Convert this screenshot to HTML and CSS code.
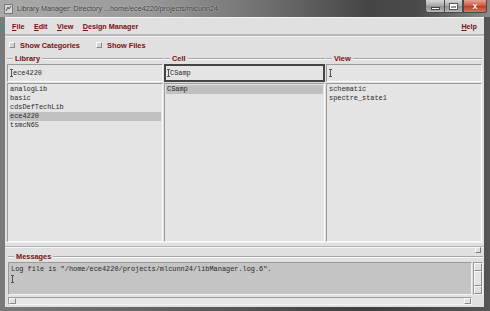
FILE: index.html
```html
<!DOCTYPE html>
<html>
<head>
<meta charset="utf-8">
<link rel="stylesheet" href="styles.css">
</head>
<body>
<div class="window">
  <div class="titlebar">
    <svg class="appicon" width="9" height="10" viewBox="0 0 9 10">
      <rect x="0.5" y="0.5" width="8" height="9" fill="#d8d8d8" stroke="#777"/>
      <path d="M2 7 L4 3 L5 5 L7 2" stroke="#555" fill="none"/>
    </svg>
    <span class="title">Library Manager: Directory ...home/ece4220/projects/mlcunn24</span>
    <div class="winbtns">
      <span class="wb min"><span class="minbar"></span></span>
      <span class="wb max"><span class="maxbox"></span></span>
      <span class="wb close">x</span>
    </div>
  </div>
  <div class="client">
    <div class="menubar">
      <span class="mi"><u>F</u>ile</span>
      <span class="mi"><u>E</u>dit</span>
      <span class="mi"><u>V</u>iew</span>
      <span class="mi"><u>D</u>esign Manager</span>
      <span class="spacer"></span>
      <span class="mi help"><u>H</u>elp</span>
    </div>
    <div class="options">
      <span class="chk"><span class="box"></span>Show Categories</span>
      <span class="chk"><span class="box"></span>Show Files</span>
    </div>
    <div class="panes">
      <div class="pane side">
        <div class="ghead"><span class="gline short"></span><span class="glabel">Library</span><span class="gline"></span></div>
        <div class="field"><span class="caret"></span>ece4220</div>
        <div class="list">
          <div class="item">analogLib</div>
          <div class="item">basic</div>
          <div class="item">cdsDefTechLib</div>
          <div class="item sel">ece4220</div>
          <div class="item">tsmcN65</div>
        </div>
      </div>
      <div class="pane mid">
        <div class="ghead"><span class="gline short"></span><span class="glabel">Cell</span><span class="gline"></span></div>
        <div class="field focus"><span class="caret"></span>CSamp</div>
        <div class="list">
          <div class="item sel">CSamp</div>
        </div>
      </div>
      <div class="pane side">
        <div class="ghead"><span class="gline short"></span><span class="glabel">View</span><span class="gline"></span></div>
        <div class="field"><span class="caret"></span></div>
        <div class="list">
          <div class="item">schematic</div>
          <div class="item">spectre_state1</div>
        </div>
      </div>
    </div>
    <div class="sashrow"><span class="sash"></span></div>
    <div class="msggroup">
      <div class="ghead"><span class="gline short"></span><span class="glabel">Messages</span><span class="gline"></span></div>
      <div class="msgrow">
        <div class="msgtext">
          <div class="mline">Log file is "/home/ece4220/projects/mlcunn24/libManager.log.6".</div>
          <div class="mline"><span class="caret"></span></div>
        </div>
        <div class="vscroll">
          <span class="arrow up"></span>
          <span class="trough"></span>
          <span class="arrow down"></span>
        </div>
      </div>
      <div class="hscroll">
        <span class="harrow left"></span>
        <span class="htrough"></span>
        <span class="harrow right"></span>
      </div>
    </div>
  </div>
</div>
</body>
</html>
```

FILE: styles.css
```css
* { box-sizing: border-box; }
html, body { margin: 0; padding: 0; }
body { width: 490px; height: 311px; overflow: hidden; background: #3a3a3a; }

.window {
  width: 490px; height: 311px;
  display: flex; flex-direction: column;
  background: linear-gradient(to right, #7a7a7a 0%, #5c5c5c 40%, #3e3e3e 75%, #555 100%);
}

.titlebar {
  height: 17px; flex: none;
  display: flex; align-items: center;
  padding-left: 4px;
  background: linear-gradient(to right, #a9a9a9 0%, #9a9a9a 30%, #6e6e6e 55%, #454545 75%, #4a4a4a 85%, #8a8a8a 100%);
}
.appicon { flex: none; margin-right: 4px; }
.title {
  font-family: "Liberation Sans", Arial, sans-serif;
  font-size: 7.2px; color: #3a3a3a;
  text-shadow: 0 0 2px #d8d8d8;
  white-space: nowrap;
}
.winbtns {
  margin-left: auto; margin-right: 3px; align-self: flex-start;
  display: flex; height: 13px;
}
.wb {
  height: 13px; display: flex; align-items: center; justify-content: center;
  border: 1px solid #4a4a4a; border-top: none;
}
.min, .max {
  width: 19px;
  background: linear-gradient(#d8d8d8, #a6a6a6 50%, #8e8e8e 51%, #b8b8b8);
}
.min { border-bottom-left-radius: 3px; border-right: none; }
.minbar { width: 7px; background: #fff; border: 1px solid #444; margin-top: 4px; box-sizing: content-box; height: 1px; }
.maxbox { width: 7px; height: 5px; border: 1px solid #fff; border-top-width: 2px; box-shadow: 0 0 0 1px #555; }
.close {
  width: 24px;
  border-bottom-right-radius: 3px;
  background: linear-gradient(#e8a393, #d0543e 50%, #c23a22 51%, #d8765e);
  color: #fff; font-family: "Liberation Sans", Arial, sans-serif; font-weight: bold; font-size: 9px;
  text-shadow: 0 0 1px #333;
  line-height: 1;
}

.client {
  flex: 1;
  margin: 0 6px 6px 5px;
  background: #e0e0e0;
  display: flex; flex-direction: column;
  font-family: "Liberation Sans", Arial, sans-serif;
}

.menubar {
  height: 19px; flex: none;
  display: flex; align-items: center;
  padding: 0 7px 0 7px;
  border-top: 1px solid #f4f4f4;
  border-bottom: 2px solid #b8b8b8;
  box-shadow: 0 1px 0 #f2f2f2;
}
.mi {
  font-weight: bold; font-size: 7.2px; color: #7a1010;
  margin-right: 9.5px;
}
.mi u { text-decoration: underline; text-underline-offset: 1px; }
.spacer { flex: 1; }
.mi.help { margin-right: 0; }

.options {
  height: 18px; flex: none;
  display: flex; align-items: center;
  padding-left: 4px;
}
.chk {
  display: flex; align-items: center;
  font-weight: bold; font-size: 7.4px; color: #7a1010;
  margin-right: 16px;
}
.box {
  width: 6px; height: 6px; margin-right: 5px;
  background: #d4d4d4;
  border: 1px solid; border-color: #fafafa #8a8a8a #8a8a8a #fafafa;
}

.panes {
  height: 188px; flex: none;
  display: flex;
  padding: 0 2px;
  gap: 1px;
}
.pane { display: flex; flex-direction: column; }
.pane.side { width: 157px; }
.pane.mid { width: 162px; }

.ghead {
  height: 10px; flex: none;
  display: flex; align-items: center;
}
.glabel {
  font-weight: bold; font-size: 7.4px; color: #7a1010;
  padding: 0 2px;
  line-height: 1;
}
.gline { flex: 1; height: 2px; border-top: 1px solid #a8a8a8; border-bottom: 1px solid #f8f8f8; }
.gline.short { flex: none; width: 6px; }

.field {
  height: 18px; flex: none;
  display: flex; align-items: center;
  padding-left: 2px;
  background: #e4e4e4;
  border: 1px solid; border-color: #9a9a9a #fbfbfb #fbfbfb #9a9a9a;
  font-family: "Liberation Mono", "Courier New", monospace;
  font-size: 6.9px; color: #2a2a2a;
}
.field.focus { border: 2px solid #444; padding-left: 1px; }
.caret {
  display: inline-block; width: 3px; height: 8px; flex: none;
  border-top: 1px solid #555; border-bottom: 1px solid #555;
  background: linear-gradient(#555, #555) center / 1px 100% no-repeat;
}

.list {
  flex: 1; margin-top: 1px;
  background: #e4e4e4;
  border: 1px solid; border-color: #9a9a9a #fbfbfb #fbfbfb #9a9a9a;
  padding: 1px 1px;
  font-family: "Liberation Mono", "Courier New", monospace;
  font-size: 6.9px; color: #2a2a2a;
}
.item { height: 9px; line-height: 9px; padding-left: 1px; white-space: nowrap; }
.item.sel { background: #c0c0c0; }

.sashrow {
  height: 10px; flex: none;
  display: flex; align-items: center; justify-content: flex-end;
  padding-right: 3px;
  border-top: 1px solid #f2f2f2;
  background: linear-gradient(#e0e0e0 0 3px, #b4b4b4 3px 4px, #f6f6f6 4px 5px, #e0e0e0 5px);
}
.sash {
  width: 6px; height: 6px; margin-top: 4px;
  background: #e0e0e0;
  border: 1px solid; border-color: #fafafa #7a7a7a #7a7a7a #fafafa;
}

.msggroup {
  flex: 1;
  display: flex; flex-direction: column;
  padding: 0 1px 2px 3px;
}
.msggroup .ghead { height: 10px; }
.msgrow { height: 33px; flex: none; display: flex; gap: 1px; }
.msgtext {
  flex: 1;
  background: #c4c4c4;
  border: 1px solid; border-color: #9a9a9a #f4f4f4 #f4f4f4 #9a9a9a;
  padding: 2px 2px;
  font-family: "Liberation Mono", "Courier New", monospace;
  font-size: 6.9px; color: #2a2a2a;
}
.mline { height: 9px; line-height: 9px; white-space: nowrap; display: flex; align-items: center; }
.vscroll {
  width: 10px; flex: none;
  display: flex; flex-direction: column;
  background: #d8d8d8;
  border: 1px solid; border-color: #9a9a9a #f4f4f4 #f4f4f4 #9a9a9a;
}
.arrow { height: 8px; flex: none;
  border: 1px solid; border-color: #fafafa #8a8a8a #8a8a8a #fafafa; background: #e0e0e0; }
.trough { flex: 1; background: #e4e4e4; border: 1px solid; border-color: #fafafa #8a8a8a #8a8a8a #fafafa; }
.hscroll {
  height: 8px; flex: none; margin-top: 2px; margin-right: 11px;
  display: flex;
  background: #dcdcdc;
  border: 1px solid; border-color: #9a9a9a #f4f4f4 #f4f4f4 #9a9a9a;
}
.harrow { width: 7px; flex: none; background: #e0e0e0; border: 1px solid; border-color: #fafafa #8a8a8a #8a8a8a #fafafa; }
.htrough { flex: 1; background: #e6e6e6; }
```
